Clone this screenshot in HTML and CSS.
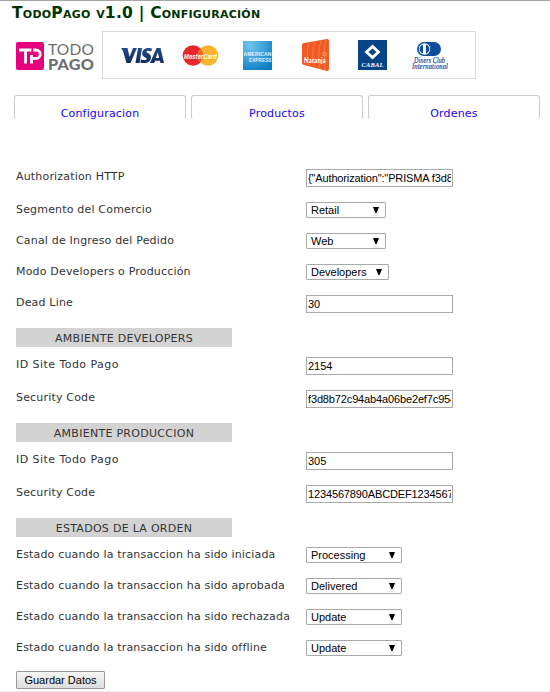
FILE: index.html
```html
<!DOCTYPE html>
<html lang="es">
<head>
<meta charset="utf-8">
<title>TodoPago v1.0 | Configuración</title>
<link rel="stylesheet" href="styles.css">
</head>
<body>
<h1 class="title">TodoPago v1.0 | Configuración</h1>
<header class="brands">
  <svg class="todopago" width="80" height="30" viewBox="0 0 80 30">
    <rect width="28" height="28" rx="2" fill="#e6007e"/>
    <path d="M3 8H15.500M9.500 7V21.500M15.500 21.500V13M17 8h3a4 4 0 0 1 0 8.500h-4" fill="none" stroke="#fff" stroke-width="2.800"/>
    <g fill="#6d6e70" font-family="Lato, sans-serif">
      <text x="32" y="12.500" font-size="15" textLength="46" lengthAdjust="spacingAndGlyphs">TODO</text>
      <text x="32" y="27.500" font-size="15" font-weight="900" textLength="46" lengthAdjust="spacingAndGlyphs">PAGO</text>
    </g>
  </svg>
  <div class="cards">
    <svg width="374" height="48" viewBox="102 31 374 48">
      <defs>
        <linearGradient id="visa" x2="0" y2="1"><stop stop-color="#214b8b"/><stop offset="1" stop-color="#102c60"/></linearGradient>
        <radialGradient id="amex" cx=".25" cy=".15" r="1"><stop stop-color="#70c5ee"/><stop offset="1" stop-color="#087ac2"/></radialGradient>
      </defs>
      <g fill="url(#visa)">
        <path d="M121 48h6.500l2 9 3.500-9h4l-6.500 15h-4L123 51Z"/>
        <path d="M138 48h4l-2.500 15h-4Z"/>
        <path d="M152 48.500l-.7 3c-2-.8-4.600-1-4.800.2-.2 1.500 4.700 1.600 4.500 5.500-.2 5.500-6 6.800-10.800 5.200l.7-3.200c2.500 1.200 5.500 1.200 5.700-.3.100-1.500-4.700-1.900-4.400-5.600.3-4.900 5.500-6.200 9.800-4.800Z"/>
        <path d="M156.500 48h4L164 63h-3.500l-.5-2.300h-4.800l-1 2.300H150Zm1.300 4.500-2 5.400h3.300Z" fill-rule="evenodd"/>
      </g>
      <circle cx="193" cy="55.500" r="10.300" fill="#e7262b"/>
      <circle cx="208" cy="55.500" r="10.300" fill="#f9b32e"/>
      <path d="M200.500 48.500a10.300 10.300 0 0 1 0 14 10.300 10.300 0 0 1 0-14" fill="#ef642b"/>
      <text x="184" y="59" font-family="Liberation Sans, sans-serif" font-size="8" font-weight="bold" font-style="italic" fill="#fff" textLength="33" lengthAdjust="spacingAndGlyphs">MasterCard</text>
      <rect x="243" y="41" width="29" height="29" fill="url(#amex)"/>
      <g font-family="Liberation Sans, sans-serif" font-size="6" font-weight="bold" fill="#e2f4fd">
        <text x="243.500" y="56" textLength="28" lengthAdjust="spacingAndGlyphs">AMERICAN</text>
        <text x="249" y="62" textLength="22.500" lengthAdjust="spacingAndGlyphs">EXPRESS</text>
      </g>
      <path d="M304 43 327 39q2 0 2 2v28q0 2-2 2l-23-6q-2-.5-2-2V45q0-2 2-2Z" fill="#f15a24"/>
      <path d="M309 43q-3 8-1 22M315 42q-4 10-1 25M321 41q-4 12-1 28M326 40q-3 10-1 30" fill="none" stroke="#f47a49" stroke-width="1"/>
      <circle cx="324.500" cy="54" r="1.800" fill="none" stroke="#fbb190" stroke-width=".7"/>
      <text x="304" y="63" font-family="Lato, sans-serif" font-size="7" font-weight="900" fill="#fff" textLength="22" lengthAdjust="spacingAndGlyphs">Naranja</text>
      <rect x="358" y="40" width="29" height="30" fill="#064488"/>
      <path d="M372.500 44.500l8 7.500-8 7.500-8-7.500Zm0 4-4 3.500 4 3.500 4-3.500Z" fill="#fff" fill-rule="evenodd"/>
      <text x="361.500" y="66.500" font-family="Liberation Serif, serif" font-size="7" font-weight="bold" font-style="italic" fill="#fff" textLength="22" lengthAdjust="spacingAndGlyphs">CABAL</text>
      <path d="M424 42h10a7 7 0 0 1 0 14h-10a7 7 0 0 1 0-14Z" fill="#0e4d9b"/>
      <circle cx="424.500" cy="49" r="6.200" fill="#fff" stroke="#0e4d9b"/>
      <path d="M423 44.500v9a4.700 4.700 0 0 1 0-9m3 0a4.700 4.700 0 0 1 0 9Z" fill="#0e4d9b"/>
      <g font-family="Liberation Serif, serif" font-size="7.500" font-style="italic" fill="#0e4d9b" stroke="#0e4d9b" stroke-width=".2">
        <text x="414" y="62.500" textLength="31" lengthAdjust="spacingAndGlyphs">Diners Club</text>
        <text x="412" y="69" textLength="36" lengthAdjust="spacingAndGlyphs">International</text>
      </g>
    </svg>
  </div>
</header>
<nav class="tabs">
  <a class="tab" href="#configuracion">Configuracion</a>
  <a class="tab" href="#productos">Productos</a>
  <a class="tab" href="#ordenes">Ordenes</a>
</nav>
<form class="settings">
  <div class="row"><label>Authorization HTTP</label><input class="field code" value='{"Authorization":"PRISMA f3d8b72c94ab4a06be2ef7c95490f7d3"}'></div>
  <div class="row"><label>Segmento del Comercio</label><div class="select">Retail<i class="arrow"></i></div></div>
  <div class="row"><label>Canal de Ingreso del Pedido</label><div class="select">Web<i class="arrow"></i></div></div>
  <div class="row"><label>Modo Developers o Producción</label><div class="select mode">Developers<i class="arrow"></i></div></div>
  <div class="row"><label>Dead Line</label><input class="field" value="30"></div>
  <h2 class="section">AMBIENTE DEVELOPERS</h2>
  <div class="row"><label class="site">ID Site Todo Pago</label><input class="field" value="2154"></div>
  <div class="row"><label>Security Code</label><input class="field code" value="f3d8b72c94ab4a06be2ef7c95490f7d3"></div>
  <h2 class="section">AMBIENTE PRODUCCION</h2>
  <div class="row"><label class="site">ID Site Todo Pago</label><input class="field" value="305"></div>
  <div class="row"><label>Security Code</label><input class="field code" value="1234567890ABCDEF1234567890ABCDEF"></div>
  <h2 class="section">ESTADOS DE LA ORDEN</h2>
  <div class="row"><label>Estado cuando la transaccion ha sido iniciada</label><div class="select state">Processing<i class="arrow"></i></div></div>
  <div class="row"><label>Estado cuando la transaccion ha sido aprobada</label><div class="select state">Delivered<i class="arrow"></i></div></div>
  <div class="row"><label>Estado cuando la transaccion ha sido rechazada</label><div class="select state">Update<i class="arrow"></i></div></div>
  <div class="row"><label>Estado cuando la transaccion ha sido offline</label><div class="select state">Update<i class="arrow"></i></div></div>
  <button class="save" type="button">Guardar Datos</button>
</form>
</body>
</html>
```
FILE: styles.css
```css
* { box-sizing: border-box; }
body {
  margin: 0;
  height: 692px;
  overflow: hidden;
  background: #fff;
  border-top: 1px solid #a5a5a5;
  color: #333;
  font: 11px/13px "DejaVu Sans", sans-serif;
  letter-spacing: .18px;
}
.title {
  margin: 2px 0 0 12px;
  height: 20px;
  font-size: 15.5px;
  line-height: 20px;
  letter-spacing: .23px;
  font-variant: small-caps;
  color: #030;
  white-space: nowrap;
}
.brands {
  display: flex;
  margin: 8px 0 0 16px;
  height: 48px;
}
.todopago { margin: 11px 6px 0 0; overflow: visible; }
.cards { width: 374px; height: 48px; border: 1px solid #d9d9d9; }
.cards svg { display: block; margin: -1px; }
.tabs {
  display: flex;
  gap: 5px;
  margin: 16px 0 0 14px;
}
.tab {
  width: 172px;
  height: 24px;
  border: 1px solid #ccc;
  border-bottom: 0;
  border-radius: 3px 3px 2px 2px;
  padding-top: 11px;
  text-align: center;
  text-decoration: none;
  color: #20f;
}
.settings {
  display: flex;
  flex-direction: column;
  margin-top: 50px;
  padding-left: 16px;
  height: 523px;
  border-bottom: 1px solid #eee;
}
.row {
  display: flex;
  align-items: flex-start;
  margin-bottom: 15px;
}
.row label { width: 290px; height: 14px; padding-top: 1px; white-space: nowrap; }
.row .site { letter-spacing: .45px; }
.field {
  width: 147px;
  height: 18px;
  border: 1px solid #a9a9a9;
  padding: 1px;
  background: #fff;
  color: #000;
  font: 11px "Liberation Sans", sans-serif;
}
.code { letter-spacing: -.14px; }
.select {
  display: flex;
  justify-content: space-between;
  align-items: center;
  width: 80px;
  height: 16px;
  border: 1px solid #a9a9a9;
  border-radius: 1px;
  padding: 0 6px 0 4px;
  color: #000;
  font: 11px/14px "Liberation Sans", sans-serif;
  letter-spacing: 0;
}
.mode { width: 83px; }
.state { width: 96px; }
.arrow {
  width: 6px;
  height: 6px;
  background: #000;
  clip-path: polygon(0 0, 100% 0, 60% 100%, 40% 100%);
}
.section {
  width: 216px;
  height: 19px;
  margin: 0 0 10px;
  background: #d3d3d3;
  font-size: 11px;
  font-weight: normal;
  line-height: 21px;
  letter-spacing: .28px;
  text-align: center;
}
.save {
  width: 89px;
  height: 18px;
  border: 1px solid #999;
  border-radius: 1px;
  padding: 0;
  background: linear-gradient(#f6f6f6, #ddd);
  color: #000;
  font: 11px/15px "Liberation Sans", sans-serif;
}
```
